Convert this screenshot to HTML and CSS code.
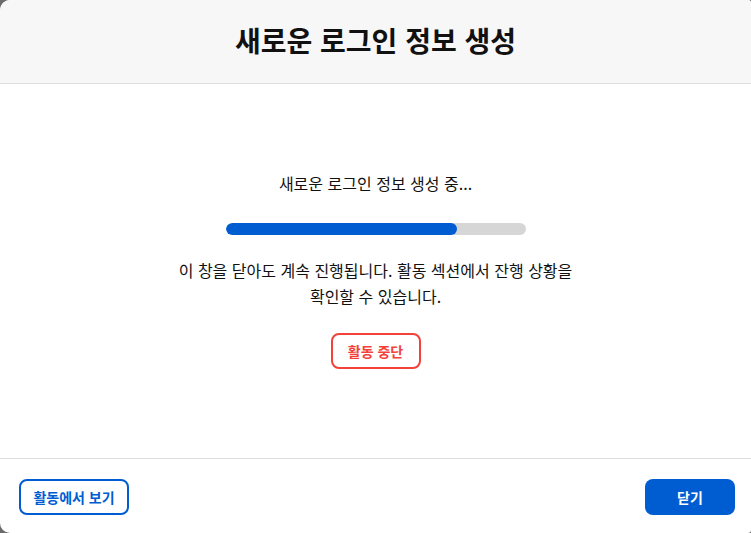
FILE: index.html
```html
<!DOCTYPE html>
<html lang="ko">
<head>
<meta charset="utf-8">
<link rel="stylesheet" href="styles.css">
</head>
<body>
<div class="dialog">
  <header class="head">
    <h1 class="title">새로운 로그인 정보 생성</h1>
  </header>
  <main class="content">
    <p class="status">새로운 로그인 정보 생성 중...</p>
    <div class="track"><div class="fill" style="width:77.3%"></div></div>
    <p class="note">이 창을 닫아도 계속 진행됩니다. 활동 섹션에서 잔행 상황을<br>확인할 수 있습니다.</p>
    <button class="btn btn-danger">활동 중단</button>
  </main>
  <footer class="foot">
    <button class="btn btn-outline">활동에서 보기</button>
    <button class="btn btn-primary">닫기</button>
  </footer>
</div>
</body>
</html>
```
FILE: styles.css
```css
* { box-sizing: border-box; }
html, body { margin: 0; height: 100%; }
body {
  background: #6b6b6b;
  font-family: "Noto Sans CJK KR", "Noto Sans", sans-serif;
  color: #111;
}
.dialog {
  width: 751px;
  height: 533px;
  background: #fff;
  border-radius: 10px 3px 3px 10px;
  overflow: hidden;
  display: flex;
  flex-direction: column;
}
.head {
  height: 84px;
  flex: none;
  background: #f7f7f7;
  border-bottom: 1px solid #dedede;
  display: flex;
  align-items: center;
  justify-content: center;
}
.title {
  margin: 0 0 4px;
  font-size: 28px;
  font-weight: 700;
  letter-spacing: 0;
  color: #111;
}
.content {
  flex: 1;
  display: flex;
  flex-direction: column;
  align-items: center;
  justify-content: center;
  padding-bottom: 2px;
}
.status {
  margin: 0;
  font-size: 16px;
  line-height: 24px;
  color: #111;
}
.track {
  margin-top: 28px;
  width: 300px;
  height: 12px;
  border-radius: 6px;
  background: #d6d6d6;
  overflow: hidden;
}
.fill {
  height: 100%;
  background: #005dd1;
  border-radius: 6px;
}
.note {
  margin: 22px 0 0;
  font-size: 16px;
  line-height: 26px;
  text-align: center;
  color: #111;
}
.btn {
  font-family: inherit;
  font-size: 14px;
  font-weight: 700;
  height: 36px;
  border-radius: 8px;
  cursor: pointer;
  padding: 0;
  background: #fff;
}
.btn-danger {
  margin-top: 24px;
  width: 90px;
  border: 2px solid #f2423a;
  color: #f2423a;
}
.foot {
  height: 75px;
  flex: none;
  border-top: 1px solid #dedede;
  display: flex;
  align-items: center;
  justify-content: space-between;
  padding: 1px 16px 0 19px;
}
.btn-outline {
  width: 110px;
  border: 2px solid #005dd1;
  color: #005dd1;
}
.btn-primary {
  width: 90px;
  border: none;
  background: #005dd1;
  color: #fff;
}
```
